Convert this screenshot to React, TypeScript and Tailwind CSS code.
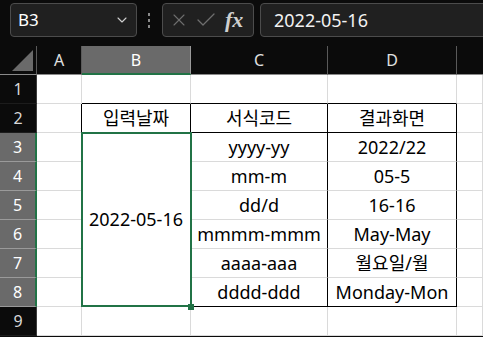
import { ChevronDown, X, Check } from 'lucide-react';

const rows: { c: string; d: string }[] = [
  { c: 'yyyy-yy', d: '2022/22' },
  { c: 'mm-m', d: '05-5' },
  { c: 'dd/d', d: '16-16' },
  { c: 'mmmm-mmm', d: 'May-May' },
  { c: 'aaaa-aaa', d: '월요일/월' },
  { c: 'dddd-ddd', d: 'Monday-Mon' },
];

const cell = 'flex items-center justify-center border-r border-b text-[18px] text-black bg-white';

function RowHead({ n, selected }: { n: number; selected?: boolean }) {
  return selected ? (
    <div className="flex items-center justify-center bg-[#6a6a6a] text-white text-[16px] border-b border-[#9a9a9a] border-r-2 border-r-[#217346]">
      {n}
    </div>
  ) : (
    <div className="flex items-center justify-center bg-[#0b0b0b] text-[#d8d8d8] text-[16px] border-b border-[#1c1c1c] border-r border-r-[#3c3c3c]">
      {n}
    </div>
  );
}

export default function App() {
  return (
    <div className="w-[483px] h-[337px] overflow-hidden bg-[#0b0b0b] font-['Noto_Sans','Noto_Sans_CJK_KR',sans-serif]">
      {/* formula bar */}
      <div className="h-[46px] flex items-start pt-[3px] overflow-hidden">
        <div className="shrink-0 ml-[10px] w-[127px] h-[34px] rounded-[4px] border border-[#4c4c4c] bg-[#202020] flex items-center justify-between pl-[7px] pr-[6px] text-white text-[17px]">
          <span>B3</span>
          <ChevronDown size={16} strokeWidth={1.6} className="text-[#d0d0d0]" />
        </div>
        <div className="shrink-0 ml-[11px] mr-[12px] h-[34px] flex flex-col justify-center gap-[3px]">
          <div className="w-[2px] h-[3px] bg-[#8a8a8a]" />
          <div className="w-[2px] h-[3px] bg-[#8a8a8a]" />
          <div className="w-[2px] h-[3px] bg-[#8a8a8a]" />
        </div>
        <div className="shrink-0 w-[92px] h-[34px] rounded-[4px] border border-[#4c4c4c] bg-[#202020] flex items-center pl-[6px]">
          <X size={20} strokeWidth={1.3} className="text-[#6e6e6e]" />
          <Check size={24} strokeWidth={1.3} className="ml-[5px] text-[#6e6e6e]" />
          <span className="ml-[7px] text-[#cfcfcf] text-[22px] italic font-bold font-['Liberation_Serif',serif] leading-none">fx</span>
        </div>
        <div className="shrink-0 ml-[6px] w-[260px] h-[34px] rounded-[4px] border border-[#4c4c4c] bg-[#202020] flex items-center pl-[13px] text-[#f2f2f2] text-[18px]">
          2022-05-16
        </div>
      </div>

      {/* sheet */}
      <div className="grid grid-cols-[37px_45px_109px_137px_129px_1fr] auto-rows-[29px]">
        {/* column headers */}
        <div className="relative bg-[#0b0b0b] border-b border-[#8a8a8a] border-r border-r-[#5a5a5a]">
          <div className="absolute left-[12px] top-[4px] w-0 h-0 border-l-[21px] border-l-transparent border-b-[21px] border-b-[#6a6a6a]" />
        </div>
        <div className="flex items-center justify-center bg-[#0b0b0b] text-[#e0e0e0] text-[16px] border-b border-[#8a8a8a] border-r border-r-[#5a5a5a]">A</div>
        <div className="flex items-center justify-center bg-[#6a6a6a] text-white text-[16px] border-b-2 border-[#217346] border-r border-r-[#9a9a9a]">B</div>
        <div className="flex items-center justify-center bg-[#0b0b0b] text-[#e0e0e0] text-[16px] border-b border-[#8a8a8a] border-r border-r-[#5a5a5a]">C</div>
        <div className="flex items-center justify-center bg-[#0b0b0b] text-[#e0e0e0] text-[16px] border-b border-[#8a8a8a] border-r border-r-[#5a5a5a]">D</div>
        <div className="bg-[#0b0b0b] border-b border-[#8a8a8a]" />

        {/* row 1 */}
        <RowHead n={1} />
        <div className={`${cell} border-[#dadada]`} />
        <div className={`${cell} border-[#dadada] border-b-black`} />
        <div className={`${cell} border-[#dadada] border-b-black`} />
        <div className={`${cell} border-[#dadada] border-b-black`} />
        <div className={`${cell} border-[#dadada]`} />

        {/* row 2 */}
        <RowHead n={2} />
        <div className={`${cell} border-[#dadada] border-r-black`} />
        <div className={`${cell} border-black bg-[#fff2cc]`}>입력날짜</div>
        <div className={`${cell} border-black bg-[#fff2cc]`}>서식코드</div>
        <div className={`${cell} border-black bg-[#fff2cc]`}>결과화면</div>
        <div className={`${cell} border-[#dadada]`} />

        {/* rows 3-8 */}
        {rows.map((r, i) => {
          const last = i === rows.length - 1;
          return [
            <RowHead key={`h${i}`} n={i + 3} selected />,
            <div key={`a${i}`} className={`${cell} border-[#dadada] border-r-black`} />,
            i === 0 ? (
              <div key="merged" className={`${cell} row-span-6 relative border-black`}>
                2022-05-16
                <div className="absolute -left-[1px] -top-[1px] -right-[2px] -bottom-[1px] border-2 border-[#217346]" />
                <div className="absolute -right-[4px] -bottom-[4px] w-[6px] h-[6px] bg-[#217346] z-10" />
              </div>
            ) : null,
            <div key={`c${i}`} className={`${cell} border-r-black ${last ? 'border-b-black' : 'border-b-[#dadada]'}`}>{r.c}</div>,
            <div key={`d${i}`} className={`${cell} border-r-black ${last ? 'border-b-black' : 'border-b-[#dadada]'}`}>{r.d}</div>,
            <div key={`e${i}`} className={`${cell} border-[#dadada]`} />,
          ];
        })}

        {/* row 9 */}
        <RowHead n={9} />
        <div className={`${cell} border-[#dadada]`} />
        <div className={`${cell} border-[#dadada]`} />
        <div className={`${cell} border-[#dadada]`} />
        <div className={`${cell} border-[#dadada]`} />
        <div className={`${cell} border-[#dadada]`} />
      </div>
    </div>
  );
}
